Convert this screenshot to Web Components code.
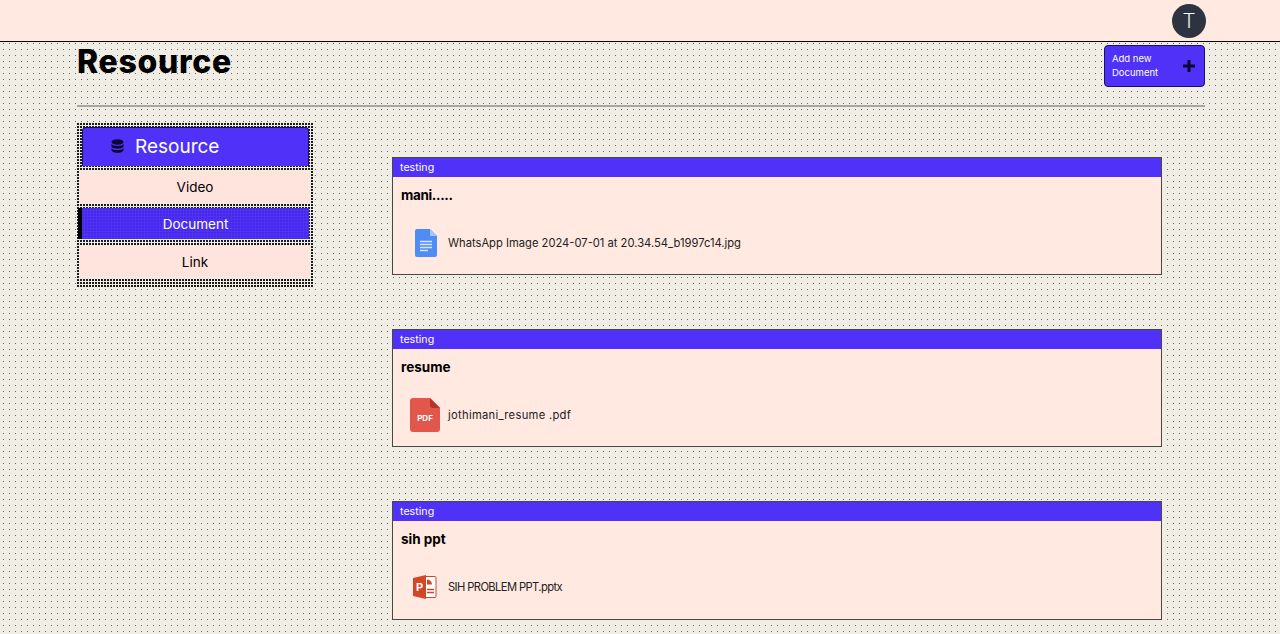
<!doctype html>
<html><head><meta charset="utf-8"><style>
html,body{margin:0;height:634px;overflow:hidden}
body{font-family:Inter,"Open Sans",sans-serif;color:#000;background-color:#f0ede5;background-image:radial-gradient(circle at .5px .5px,#6a6864 .6px,transparent .6px);background-size:6px 6px;background-position:3px 1px}
</style></head><body>
<app-top></app-top>
<res-page></res-page>
<script>
function def(n,html,init){customElements.define(n,class extends HTMLElement{constructor(){super();this.attachShadow({mode:'open'}).innerHTML=html;}connectedCallback(){if(init)init(this)}})}
def('app-top',`<style>:host{display:flex;justify-content:flex-end;align-items:flex-start;height:41px;background:#ffe9e1;border-bottom:1px solid #000;padding:0 74px 0 0;box-sizing:content-box}
.a{width:34px;height:34px;margin-top:4px;border-radius:50%;background:#2d3340;color:#fff;display:flex;align-items:center;justify-content:center;font:300 20px Roboto,sans-serif}</style><div class="a">T</div>`);
def('res-page',`<style>:host{display:block;padding:0 75px 0 77px}
.head{display:flex;justify-content:space-between;align-items:flex-start;height:63px;border-bottom:2px solid #a8a6a0}
h1{margin:0;font:800 32px/38px Inter,sans-serif;letter-spacing:.7px;padding-top:1px}
.body{display:flex;margin-top:16px}
.list{display:flex;flex-direction:column;gap:54px;margin:34px 43px 0 78px;flex:1}
</style><div class="head"><h1>Resource</h1><add-btn></add-btn></div>
<div class="body"><side-bar></side-bar><div class="list">
<res-card tag="testing" title="mani....." file="WhatsApp Image 2024-07-01 at 20.34.54_b1997c14.jpg" kind="doc" ls="0" tls="-.35px"></res-card>
<res-card tag="testing" title="resume" file="jothimani_resume .pdf" kind="pdf" ls=".3px" tls="0"></res-card>
<res-card tag="testing" title="sih ppt" file="SIH PROBLEM PPT.pptx" kind="ppt" ls="-.6px" tls="0" style="height:119px"></res-card>
</div></div>`);
def('add-btn',`<style>:host{display:flex;align-items:center;justify-content:space-between;box-sizing:border-box;width:101px;height:42px;margin-top:3px;padding:0 8px 0 7px;background:#5031f7;border:1px solid #1a1060;border-radius:4px;color:#fff;font:400 9.5px/13.5px Inter,sans-serif}
div{margin-top:-1px}
svg{display:block}</style><div>Add new<br>Document</div><svg width="14" height="14" viewBox="0 0 14 14"><path d="M7 1v12M1 7h12" stroke="#0b0730" stroke-width="3"/></svg>`);
def('side-bar',`<style>:host{display:block;box-sizing:border-box;width:237px;height:165px;padding:4px 4px 10px 3px;background-color:#f0ede5;background-image:radial-gradient(circle at 1px 1px,#1c1c1c 1.1px,transparent 1.1px);background-size:3px 3px}
.h{display:flex;align-items:center;height:39px;box-sizing:border-box;margin:0 1px 5px 2px;padding:0 0 2px 28px;gap:11px;background:#5031f7;border:1px solid #1a1060;border-bottom-width:0;border-radius:4px 4px 0 0;color:#fff;font:400 19px Inter,sans-serif}
.i{height:32px;background:#ffe3dd;display:flex;align-items:center;justify-content:center;font:400 13.5px Inter,sans-serif;margin-bottom:5px}
.on{height:31px;margin:0 1px 6px -2px;box-sizing:border-box;background-color:#5031f7;color:#fff;border-left:4px solid #000;background-image:radial-gradient(circle at 1px 1px,#4629e6 1px,transparent 1px);background-size:3px 3px}
.l{height:33px;margin:0}
</style><div class="h"><svg width="13" height="14" viewBox="0 0 13 14"><g fill="#0b0730"><ellipse cx="6.5" cy="3" rx="6" ry="2.8"/><path d="M.5 5c1 2.6 11 2.6 12 0v2.4c-1 3-11 3-12 0zM.5 9.2c1 2.6 11 2.6 12 0v2c-1 3.4-11 3.4-12 0z"/></g></svg><span>Resource</span></div>
<div class="i">Video</div><div class="i on">Document</div><div class="i l">Link</div>`);
const icons={
doc:`<svg width="22" height="28" viewBox="0 0 22 28"><path d="M2 0h13l7 7v19a2 2 0 0 1-2 2H2a2 2 0 0 1-2-2V2a2 2 0 0 1 2-2z" fill="#4f8df5"/><path d="M15 0l7 7h-7z" fill="#a8c6fa"/><path d="M5 12.5h12M5 15.5h12M5 18.5h12M5 21.5h8" stroke="#d6e4fc" stroke-width="1.6"/></svg>`,
pdf:`<svg width="30" height="34" viewBox="0 0 30 34" style="margin-left:-2px"><path d="M3 0h17l10 10v21a3 3 0 0 1-3 3H3a3 3 0 0 1-3-3V3a3 3 0 0 1 3-3z" fill="#e2574c"/><path d="M20 0l10 10h-7a3 3 0 0 1-3-3z" fill="#b53629"/><text x="15" y="23" text-anchor="middle" font-family="Inter,sans-serif" font-weight="700" font-size="8" fill="#fff">PDF</text></svg>`,
ppt:`<svg width="24" height="24" viewBox="0 0 24 24" style="margin-left:-2px"><path d="M9 1.5h13a1 1 0 0 1 1 1v19a1 1 0 0 1-1 1H9z" fill="#fff" stroke="#d24726"/><path d="M14 4.5a5 5 0 0 1 5 5h-5z" fill="#d24726"/><path d="M14 14.5h7M14 17.5h7" stroke="#d24726" stroke-width="1.5"/><path d="M0 3l13-3v24L0 21z" fill="#d24726"/><text x="6.5" y="16" text-anchor="middle" font-family="Inter,sans-serif" font-weight="700" font-size="11" fill="#fff">P</text></svg>`};
def('res-card',`<style>:host{display:block;box-sizing:border-box;height:118px;background:#ffe9e1;border:1px solid #4b4743}
.t{background:#5031f7;color:#fff;height:19px;padding-left:7px;font:400 10.7px/19px Inter,sans-serif}
.n{font:700 13.5px/17px Inter,sans-serif;padding:10px 0 0 8px}
.f{display:flex;align-items:center;gap:11px;height:40px;margin:19px 0 0 22px;font:400 11.2px Inter,sans-serif;color:#222}
.ic{display:flex;justify-content:center;width:22px}svg{flex:none}</style><div class="t"></div><div class="n"></div><div class="f"><span class="ic"></span><span class="fn"></span></div>`,
el=>{const s=el.shadowRoot;s.querySelector('.t').textContent=el.getAttribute('tag');const n=s.querySelector('.n');n.textContent=el.getAttribute('title');n.style.letterSpacing=el.getAttribute('tls');const f=s.querySelector('.fn');f.textContent=el.getAttribute('file');f.style.letterSpacing=el.getAttribute('ls');s.querySelector('.ic').innerHTML=icons[el.getAttribute('kind')];});
</script></body></html>
